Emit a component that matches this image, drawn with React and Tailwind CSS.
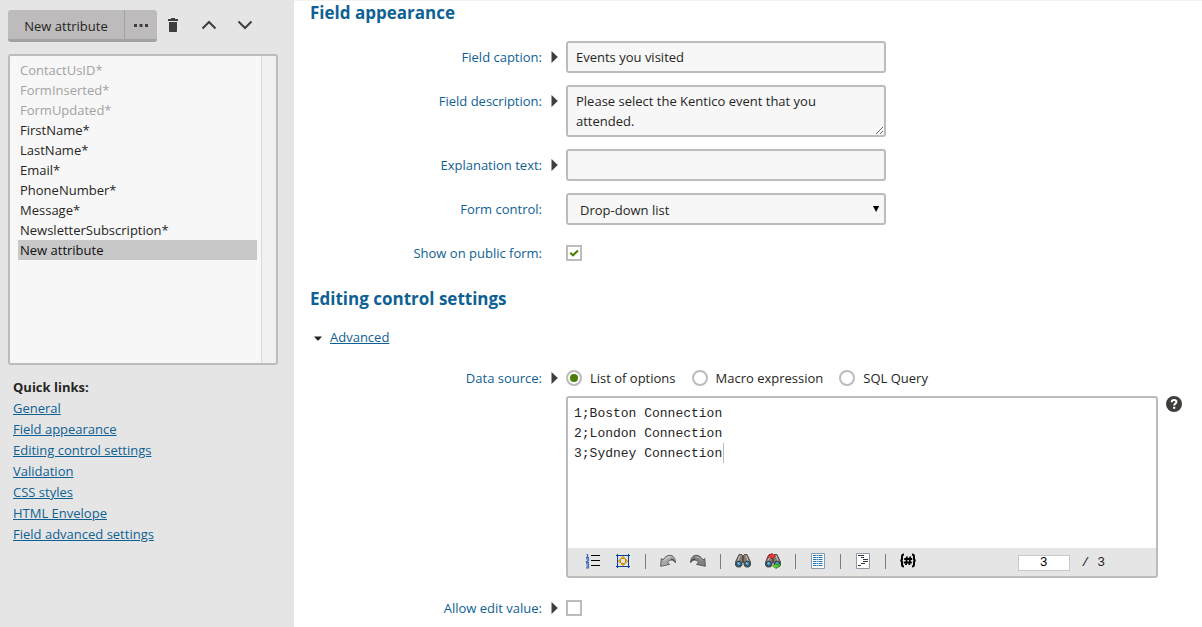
import { useState } from "react";

const attributes = [
  { name: "ContactUsID*", disabled: true },
  { name: "FormInserted*", disabled: true },
  { name: "FormUpdated*", disabled: true },
  { name: "FirstName*" },
  { name: "LastName*" },
  { name: "Email*" },
  { name: "PhoneNumber*" },
  { name: "Message*" },
  { name: "NewsletterSubscription*" },
  { name: "New attribute" },
];

const quickLinks = [
  "General",
  "Field appearance",
  "Editing control settings",
  "Validation",
  "CSS styles",
  "HTML Envelope",
  "Field advanced settings",
];

const dataSources = ["List of options", "Macro expression", "SQL Query"];

const fieldClass =
  "block w-80 max-w-full rounded-[3px] border-2 border-[#bdbbbb] bg-[#f7f7f7] px-2 text-[#262524] outline-none";

function TrashIcon() {
  return (
    <svg width="16" height="16" viewBox="0 0 16 16" fill="#403e3d" aria-hidden="true">
      <path d="M3 2h3V1h4v1h3v2H3zM4 5h8v9.3a.7.7 0 0 1-.7.7H4.700a.7.7 0 0 1-.7-.7z" />
    </svg>
  );
}

function Chevron({ up }) {
  return (
    <svg width="16" height="16" viewBox="0 0 16 16" fill="none" stroke="#403e3d" strokeWidth="2" aria-hidden="true">
      <path d={up ? "M1.500 11.500 8 5l6.500 6.500" : "M1.500 4.500 8 11l6.500-6.500"} />
    </svg>
  );
}

function Row({ label, htmlFor, arrow = true, children }) {
  return (
    <div className="flex items-start">
      <div className="flex w-[256px] shrink-0 items-center justify-end">
        <label htmlFor={htmlFor} className="text-right leading-8 text-[#0f6194]">
          {label}
        </label>
        <span className="flex h-8 w-6 items-center pl-[9px]">
          {arrow && (
            <svg width="8" height="12" viewBox="0 0 8 12" fill="#403e3d" aria-hidden="true">
              <path d="M.5 0 6.800 6 .5 12z" />
            </svg>
          )}
        </span>
      </div>
      {children}
    </div>
  );
}

function CheckBox({ id, defaultChecked }) {
  return (
    <span className="relative flex h-8 items-center">
      <input
        id={id}
        type="checkbox"
        defaultChecked={defaultChecked}
        className="peer size-4 appearance-none border-2 border-[#bdbbbb] bg-white"
      />
      <svg
        className="pointer-events-none absolute left-0 hidden peer-checked:block"
        width="16"
        height="16"
        viewBox="0 0 16 16"
        fill="none"
        stroke="#497d04"
        strokeWidth="2"
        aria-hidden="true"
      >
        <path d="M4.200 7.800 7 10.300l5-4.800" />
      </svg>
    </span>
  );
}

function ListIcon() {
  return (
    <svg width="16" height="16" viewBox="0 0 16 16" fill="none" aria-hidden="true">
      <path d="M6 2.500h9M6 7.500h9M6 12.500h9" stroke="#000" />
      <path
        d="M1.500 1.500H3M2.500 1v3M1 4.300h3M1 5.800h2.500v1.500L1.500 8.500v.8H4M1 10.800h2.500v4H1M1.500 12.800h2"
        stroke="#4267b8"
        strokeWidth="1.200"
      />
    </svg>
  );
}

function FullScreenIcon() {
  return (
    <svg width="16" height="16" viewBox="0 0 16 16" aria-hidden="true">
      <path d="M2 2h12v12H2z" fill="#dfe6f2" />
      <path d="M2.500 1v14M13.500 1v14M1 2.500h14M1 13.500h14" stroke="#0b3f9c" fill="none" />
      <path
        d="M8 3.300l2 2.200H6zM8 12.700l2-2.200H6zM3.300 8l2.200-2v4zM12.700 8l-2.200-2v4z"
        fill="#ffc20a"
        stroke="#c98a00"
        strokeWidth="1"
        strokeLinejoin="round"
      />
    </svg>
  );
}

function UndoIcon({ flip }) {
  return (
    <svg width="16" height="16" viewBox="0 0 16 16" className={flip ? "-scale-x-100" : ""} aria-hidden="true">
      <path
        d="M.6 13.300 1.200 5.500l1.900 1.400C4.800 4 7 2.300 9.800 2.300c3.600 0 5.700 3.200 5.600 7.400-1.100-1.900-2.900-2.900-4.500-2.600-1.500.3-2.700 1.300-3.300 2.600l2 1.700z"
        fill={flip ? "#828282" : "#a9a9a9"}
        stroke="#4a4a4a"
        strokeWidth=".8"
      />
      <path d="M4 7.700C6 5 8 3.800 10.300 3.900" stroke={flip ? "#b5b5b5" : "#e0e0e0"} fill="none" />
      <path d="M15 9C14 7 12.500 6 11 6.300" stroke="#333" fill="none" />
    </svg>
  );
}

function BinocularsIcon({ replace }) {
  return (
    <svg width="16" height="16" viewBox="0 0 16 16" aria-hidden="true">
      <path
        d="M3 3.500 4 1.500h2.700l.8 1h1l.8-1H12l1 2 2.500 5.500v3.500l-1.500 1.500h-3.500L9 12V9.500H7V12l-1.500 2H2L.5 12.500V9z"
        fill="#857c70"
        stroke="#3d3833"
        strokeWidth=".8"
      />
      <path d="M5 2.500 3 8M11 2.500l2 5.500" stroke="#cfc8bc" fill="none" />
      <path d="M8 3v6" stroke="#2a2724" />
      <circle cx="3.800" cy="10.700" r="2.500" fill="#4a93c5" stroke="#1e3441" />
      <circle cx="12.200" cy="10.700" r="2.500" fill="#4a93c5" stroke="#1e3441" />
      <path d="M2.800 10.200h1M11.200 10.200h1" stroke="#bfe0f3" />
      {replace && (
        <>
          <path
            d="M2 5.500C2.500 3 4 1.800 6.500 1.800V0l4 3-4 3V4.200C4.500 4 3.300 4.500 2 5.500z"
            fill="#f23b3b"
            stroke="#a31212"
            strokeWidth=".5"
          />
          <path
            d="M15.800 10.500c-.3 2.500-1.900 3.700-4.300 3.700V16l-4-3 4-2.800V12c1.800 0 3-.5 4.300-1.500z"
            fill="#58d32c"
            stroke="#1d7d0a"
            strokeWidth=".5"
          />
        </>
      )}
    </svg>
  );
}

function PageIcon({ indented }) {
  return (
    <svg width="16" height="16" viewBox="0 0 16 16" fill="none" aria-hidden="true">
      <path d="M1.500.5h13v15h-13z" fill="#fff" stroke="#8d9bad" />
      {indented ? (
        <path d="M3 2.500h6M6 4.500h3M8 6.500h5M8 8.500h5M6 10.500h4M3 12.500h3" stroke="#333" />
      ) : (
        <path
          d="M3 2.500h10M3 4.500h10M3 6.500h10M3 8.500h10M3 10.500h10M3 12.500h10"
          stroke="#2477b3"
          strokeDasharray="3 .5 2 .5"
        />
      )}
    </svg>
  );
}

function MacroIcon() {
  return (
    <svg width="16" height="16" viewBox="0 0 16 16" fill="none" stroke="#000" aria-hidden="true">
      <path
        d="M4 1.500C2.500 1.500 2 2 2 3.500V6C2 7 1.500 7.500.3 7.500 1.500 7.500 2 8 2 9v2.500c0 1.500.5 2 2 2M12 1.500c1.500 0 2 .5 2 2V6c0 1 .5 1.500 1.700 1.500C14.500 7.500 14 8 14 9v2.500c0 1.500-.5 2-2 2"
        strokeWidth="2"
      />
      <path d="M7 3.500 6 12M10.300 3.500l-1 8.500M4.200 6h8M3.800 9.500h8" strokeWidth="1.800" />
    </svg>
  );
}

function Tool({ title, children }) {
  return (
    <button type="button" aria-label={title} className="flex h-7 w-[30px] shrink-0 items-center justify-center pb-[2px]">
      {children}
    </button>
  );
}

function Separator() {
  return (
    <span className="flex w-[15px] shrink-0 justify-center pb-[2px]">
      <span className="h-[15px] w-px bg-[#7d7d7d]" />
    </span>
  );
}

function Heading({ children }) {
  return <h2 className="mb-1 text-[17px] leading-6 font-bold text-[#0f6194]">{children}</h2>;
}

export default function App() {
  const [source, setSource] = useState(dataSources[0]);

  return (
    <div className="flex min-h-screen bg-white font-['Open_Sans',sans-serif] text-[13px] leading-5 text-[#262524]">
      <aside className="w-[294px] shrink-0 bg-[#e5e5e5] pt-[10px] pr-4 pl-2">
        <div className="flex items-start">
          <div className="flex h-8 overflow-hidden rounded-[3px] border-b-3 border-[#a3a2a2] bg-[#bdbbbb]">
            <button type="button" className="w-[116px] pt-[3px]">
              New attribute
            </button>
            <button
              type="button"
              aria-label="More actions"
              className="flex w-[33px] items-center justify-center border-l border-[#a3a2a2] pt-[2px]"
            >
              <svg width="16" height="4" viewBox="0 0 16 4" fill="#403e3d" aria-hidden="true">
                <path d="M1 0h3v3H1zM6.500 0h3v3h-3zM12 0h3v3h-3z" />
              </svg>
            </button>
          </div>
          <div className="flex gap-5 pt-[7px] pl-2">
            <button type="button" aria-label="Delete">
              <TrashIcon />
            </button>
            <button type="button" aria-label="Move up">
              <Chevron up />
            </button>
            <button type="button" aria-label="Move down">
              <Chevron />
            </button>
          </div>
        </div>

        <div className="mt-3 flex h-[311px] overflow-hidden rounded-[3px] border-2 border-[#bdbbbb] bg-[#f7f7f7]">
          <select
            aria-label="Attributes"
            size={15}
            defaultValue="New attribute"
            className="h-full min-w-0 flex-1 overflow-hidden bg-transparent py-1 pr-1 pl-2 outline-none"
          >
            {attributes.map((a) => (
              <option
                key={a.name}
                disabled={a.disabled}
                className="h-5 min-h-5 px-[2px] pt-px pb-0 leading-5 checked:bg-[#c8c8c8] disabled:text-[#a3a2a2]"
              >
                {a.name}
              </option>
            ))}
          </select>
          <div className="w-[15px] border-l border-[#d9d9d9] bg-[#f1f1f1]" />
        </div>

        <nav className="mt-3 pl-[5px] leading-[21px]">
          <h3 className="font-bold">Quick links:</h3>
          <ul>
            {quickLinks.map((l) => (
              <li key={l}>
                <a href="#" className="text-[#0f6194] underline">
                  {l}
                </a>
              </li>
            ))}
          </ul>
        </nav>
      </aside>

      <main className="min-w-0 flex-1 border-t border-[#f3f3f3] pr-5 pl-4">
        <section className="flex flex-col gap-3">
          <Heading>Field appearance</Heading>
          <Row label="Field caption:" htmlFor="caption">
            <input id="caption" defaultValue="Events you visited" className={`${fieldClass} h-8`} />
          </Row>
          <Row label="Field description:" htmlFor="description">
            <textarea
              id="description"
              defaultValue="Please select the Kentico event that you attended."
              className={`${fieldClass} h-[52px] resize overflow-hidden py-1`}
            />
          </Row>
          <Row label="Explanation text:" htmlFor="explanation">
            <input id="explanation" className={`${fieldClass} h-8`} />
          </Row>
          <Row label="Form control:" htmlFor="control" arrow={false}>
            <div className="relative">
              <select id="control" className={`${fieldClass} h-8 appearance-none pt-[2px] pl-3`}>
                <option>Drop-down list</option>
              </select>
              <svg
                className="pointer-events-none absolute top-3 right-[6px]"
                width="8"
                height="7"
                viewBox="0 0 8 7"
                fill="#000"
                aria-hidden="true"
              >
                <path d="M1 1h6.200L4.100 7z" />
              </svg>
            </div>
          </Row>
          <Row label="Show on public form:" htmlFor="public" arrow={false}>
            <CheckBox id="public" defaultChecked />
          </Row>
        </section>

        <section className="mt-[18px] flex flex-col gap-3">
          <Heading>Editing control settings</Heading>
          <div className="mb-[3px] flex h-5 items-center gap-2 pl-1">
            <svg width="8" height="8" viewBox="0 0 8 8" fill="#262524" aria-hidden="true">
              <path d="M0 3.500h8L4.500 7.500h-1z" />
            </svg>
            <a href="#" className="text-[#0f6194] underline">
              Advanced
            </a>
          </div>
          <Row label="Data source:" htmlFor="source-0">
            <div className="min-w-0 flex-1 pb-[2px]">
              <div className="flex h-8 items-center gap-4">
                {dataSources.map((s, i) => (
                  <label key={s} className="flex items-center gap-2">
                    <input
                      id={`source-${i}`}
                      type="radio"
                      name="source"
                      checked={source === s}
                      onChange={() => setSource(s)}
                      className="size-4 appearance-none rounded-full border-2 border-[#bdbbbb] bg-white bg-clip-content p-[2px] checked:bg-[#497d04]"
                    />
                    {s}
                  </label>
                ))}
              </div>
              <div className="mt-[2px] flex items-start gap-2">
                <div className="min-w-0 flex-1 overflow-hidden rounded-[3px] border-2 border-[#bdbbbb] bg-white">
                  <div className="relative">
                    <textarea
                      aria-label="Options"
                      spellCheck={false}
                      defaultValue={"1;Boston Connection\n2;London Connection\n3;Sydney Connection"}
                      className="block h-[150px] w-full resize-none px-[6px] py-[6px] font-['Liberation_Mono',monospace] text-[13px] leading-5 outline-none"
                    />
                    <span className="absolute top-[45px] left-[155px] h-5 w-px bg-[#bdbbbb]" />
                  </div>
                  <div className="flex h-7 items-center bg-[#e5e5e5] pr-[51px] pl-[10px]">
                    <Tool title="Line numbers">
                      <ListIcon />
                    </Tool>
                    <Tool title="Full screen">
                      <FullScreenIcon />
                    </Tool>
                    <Separator />
                    <Tool title="Undo">
                      <UndoIcon />
                    </Tool>
                    <Tool title="Redo">
                      <UndoIcon flip />
                    </Tool>
                    <Separator />
                    <Tool title="Find">
                      <BinocularsIcon />
                    </Tool>
                    <Tool title="Replace">
                      <BinocularsIcon replace />
                    </Tool>
                    <Separator />
                    <Tool title="Source">
                      <PageIcon />
                    </Tool>
                    <Separator />
                    <Tool title="Indent">
                      <PageIcon indented />
                    </Tool>
                    <Separator />
                    <Tool title="Insert macro">
                      <MacroIcon />
                    </Tool>
                    <div className="ml-auto flex items-center gap-3 pt-[2px] font-['Liberation_Mono',monospace] text-[13px]">
                      <input
                        aria-label="Line"
                        defaultValue="3"
                        className="h-4 w-[52px] border border-[#c8c8c8] bg-white text-center text-black outline-none"
                      />
                      <span>/ 3</span>
                    </div>
                  </div>
                </div>
                <button type="button" aria-label="Help">
                  <svg width="16" height="16" viewBox="0 0 16 16" aria-hidden="true">
                    <circle cx="8" cy="8" r="8" fill="#403e3d" />
                    <path
                      d="M5.700 6.200C5.700 4.600 6.700 3.900 8.100 3.900s2.300.8 2.300 2c0 1.700-2.200 1.700-2.200 3.700"
                      fill="none"
                      stroke="#fff"
                      strokeWidth="2"
                    />
                    <path d="M7.100 10.800h2.200v2H7.100z" fill="#fff" />
                  </svg>
                </button>
              </div>
            </div>
          </Row>
          <Row label="Allow edit value:" htmlFor="allow-edit">
            <CheckBox id="allow-edit" />
          </Row>
        </section>
      </main>
    </div>
  );
}
